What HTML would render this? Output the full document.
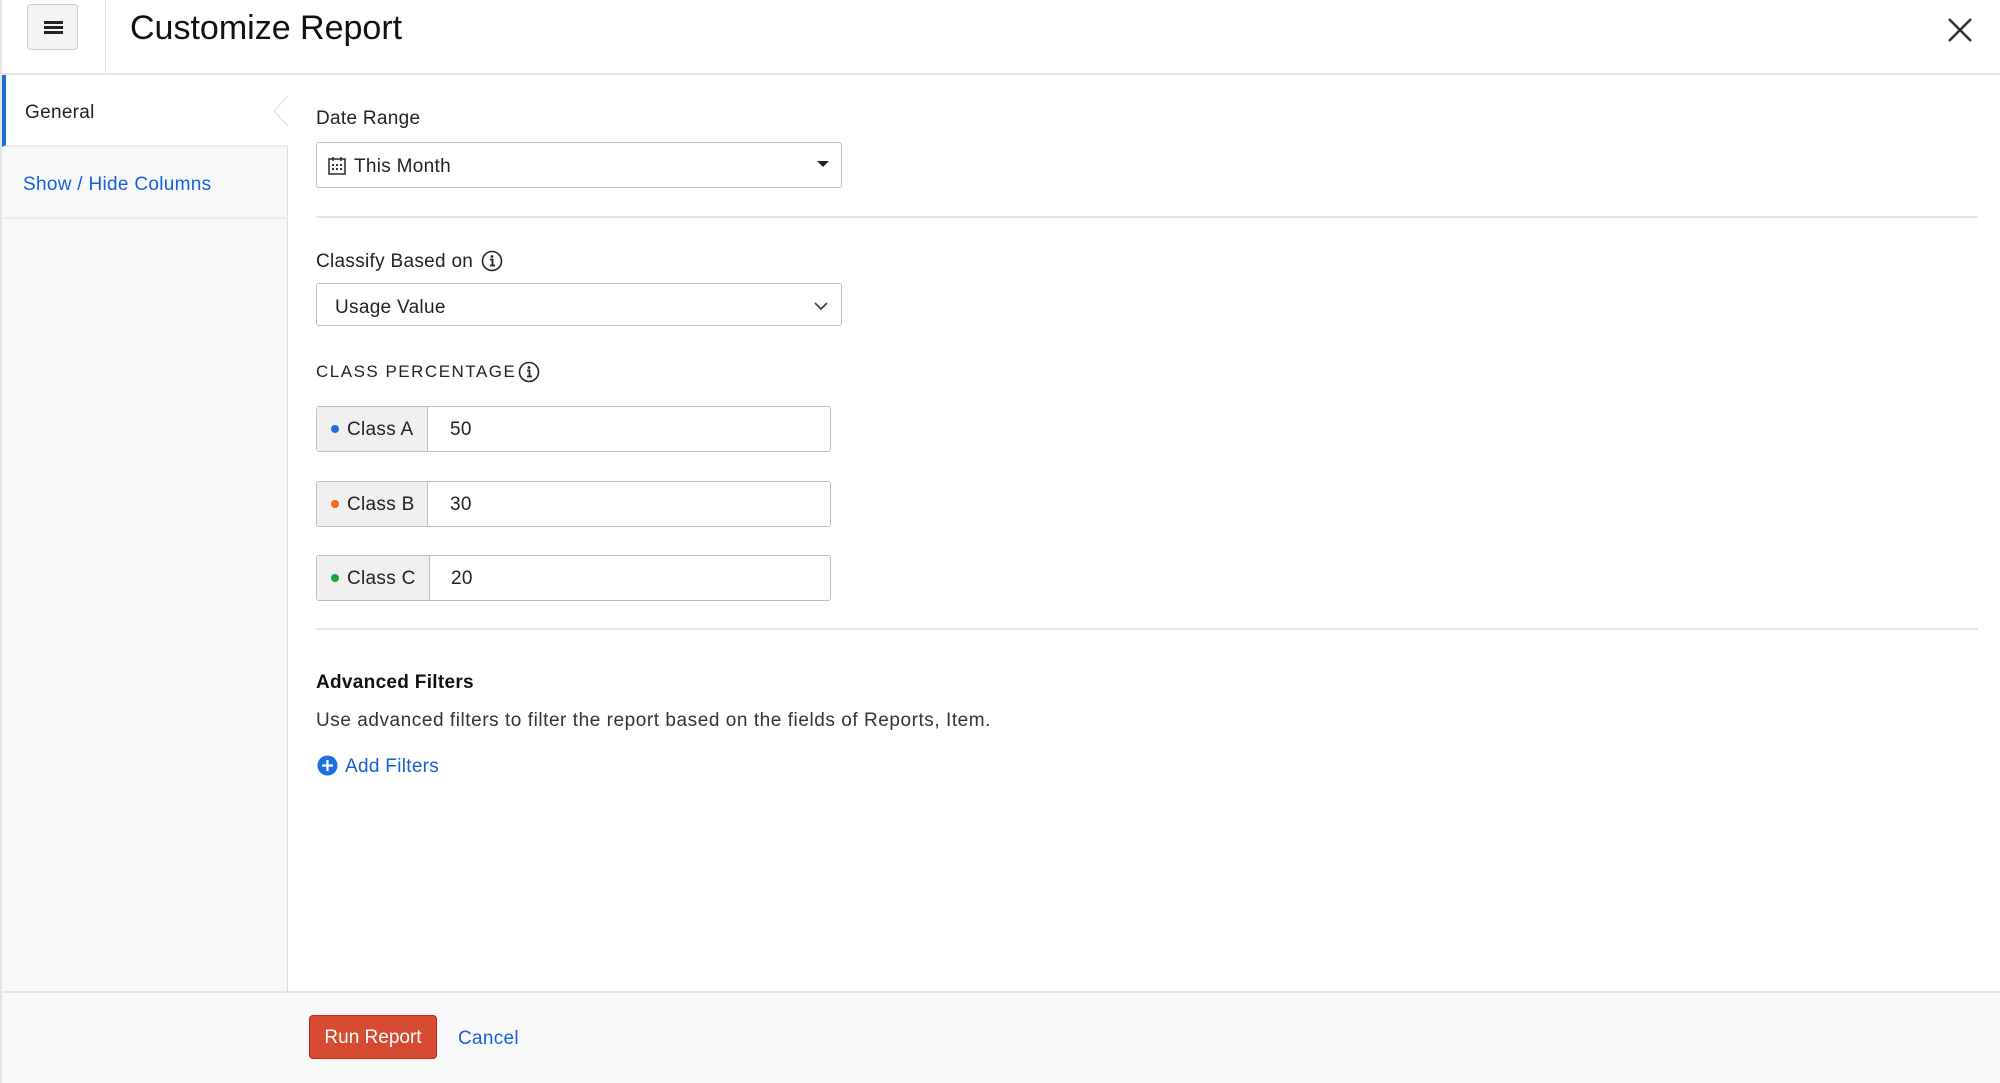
<!DOCTYPE html>
<html><head><meta charset="utf-8"><style>
*{box-sizing:border-box;margin:0;padding:0}
body{width:2000px;height:1083px;overflow:hidden;background:#fff;font-family:"Liberation Sans",Arial,sans-serif;color:#222;position:relative;letter-spacing:0.3px}
.abs{position:absolute}
.hdr{left:0;top:0;width:2000px;height:75px;border-bottom:2px solid #e4e4e4;border-left:2px solid #e4e4e4}
.ham{left:27px;top:4px;width:51px;height:46px;border:1px solid #c9ccd1;border-radius:4px;background:#f4f4f4}
.ham i{position:absolute;left:16px;width:19px;height:3px;background:#222}
.vdiv{left:105px;top:0;width:1px;height:74px;background:#e4e4e4}
.title{left:130px;top:9px;font-size:34px;color:#111;letter-spacing:0}
.side{left:0;top:75px;width:288px;height:916px;background:#f7f8fa;border-right:1px solid #dcdcdc;border-left:2px solid #e4e4e4}
.item{position:absolute;left:0;width:286px;height:72px;font-size:19px;padding-left:21px;line-height:76px;border-bottom:2px solid #ececec}
.lbl{font-size:19px;color:#222}
.box{border:1.5px solid #b9bec6;border-radius:3px;background:#fff}
.hr{left:316px;width:1662px;height:2px;background:#e4e4e4}
.cls{left:316px;width:515px;height:46px}
.cls .l{position:absolute;left:0;top:0;bottom:0;background:#efefef;border-right:1.5px solid #b9bec6;font-size:19px;line-height:46px;padding-left:30px}
.cls .l b{position:absolute;left:14px;top:18px;width:8px;height:8px;border-radius:50%}
.cls .v{position:absolute;top:0;line-height:46px;font-size:19px}
.foot{left:0;top:991px;width:2000px;height:92px;background:#f9f9f9;border-top:2px solid #e4e4e4;border-left:2px solid #e4e4e4}
</style></head><body>
<div class="abs hdr"></div>
<div class="abs ham"><i style="top:16px"></i><i style="top:21px"></i><i style="top:26px"></i></div>
<div class="abs vdiv"></div>
<div class="abs title">Customize Report</div>
<svg class="abs" style="left:1946px;top:16px" width="28" height="28" viewBox="0 0 28 28"><path d="M3 3L25 25M25 3L3 25" stroke="#333" stroke-width="2.6"/></svg>

<div class="abs side">
 <div class="item" style="top:0;background:#fff;border-left:4px solid #1c6fd1;padding-left:19px;color:#222">General</div>
 <div class="item" style="top:72px;color:#1660d6">Show / Hide Columns</div>
</div>
<svg class="abs" style="left:272px;top:95px" width="18" height="32" viewBox="0 0 18 32"><path d="M17 0L2 16L17 32Z" fill="#fff" stroke="#dcdcdc" stroke-width="1"/><rect x="16" y="0" width="3" height="32" fill="#fff"/></svg>

<div class="abs lbl" style="left:316px;top:108px">Date Range</div>
<div class="abs box" style="left:316px;top:142px;width:526px;height:46px"></div>
<svg class="abs" style="left:328px;top:156px" width="18" height="19" viewBox="0 0 18 19"><rect x="1" y="3" width="16" height="15" fill="none" stroke="#333" stroke-width="1.6"/><path d="M5 1v4M13 1v4" stroke="#333" stroke-width="1.6"/><g fill="#333"><rect x="4" y="8" width="2" height="2"/><rect x="8" y="8" width="2" height="2"/><rect x="12" y="8" width="2" height="2"/><rect x="4" y="12" width="2" height="2"/><rect x="8" y="12" width="2" height="2"/><rect x="12" y="12" width="2" height="2"/></g></svg>
<div class="abs lbl" style="left:354px;top:156px">This Month</div>
<svg class="abs" style="left:817px;top:161px" width="12" height="8"><path d="M0 0h12L6 6z" fill="#222"/></svg>

<div class="abs hr" style="top:216px"></div>

<div class="abs lbl" style="left:316px;top:251px">Classify Based on</div>
<svg class="abs" style="left:481px;top:250px" width="22" height="22" viewBox="0 0 22 22"><circle cx="11" cy="11" r="9.5" fill="none" stroke="#222" stroke-width="1.6"/><circle cx="11" cy="6.5" r="1.4" fill="#222"/><path d="M9 9.5h2.5v6M9 15.5h5" stroke="#222" stroke-width="1.8" fill="none"/></svg>
<div class="abs box" style="left:316px;top:283px;width:526px;height:43px"></div>
<div class="abs lbl" style="left:335px;top:297px">Usage Value</div>
<svg class="abs" style="left:814px;top:302px" width="14" height="9"><path d="M1 1l6 6 6-6" stroke="#444" stroke-width="1.8" fill="none"/></svg>

<div class="abs" style="left:316px;top:362px;font-size:17px;letter-spacing:1.5px;color:#222">CLASS PERCENTAGE</div>
<svg class="abs" style="left:518px;top:361px" width="22" height="22" viewBox="0 0 22 22"><circle cx="11" cy="11" r="9.5" fill="none" stroke="#222" stroke-width="1.6"/><circle cx="11" cy="6.5" r="1.4" fill="#222"/><path d="M9 9.5h2.5v6M9 15.5h5" stroke="#222" stroke-width="1.8" fill="none"/></svg>

<div class="abs cls box" style="top:406px"><div class="l" style="width:111px"><b style="background:#1c6fe0"></b>Class A</div><div class="v" style="left:133px">50</div></div>
<div class="abs cls box" style="top:481px"><div class="l" style="width:111px"><b style="background:#f06a1c"></b>Class B</div><div class="v" style="left:133px">30</div></div>
<div class="abs cls box" style="top:555px"><div class="l" style="width:113px"><b style="background:#17a33c"></b>Class C</div><div class="v" style="left:134px">20</div></div>

<div class="abs hr" style="top:628px"></div>

<div class="abs" style="left:316px;top:672px;font-size:19px;font-weight:bold;color:#111">Advanced Filters</div>
<div class="abs lbl" style="left:316px;top:710px;color:#333;letter-spacing:0.55px">Use advanced filters to filter the report based on the fields of Reports, Item.</div>
<svg class="abs" style="left:317px;top:755px" width="21" height="21" viewBox="0 0 21 21"><circle cx="10.5" cy="10.5" r="10" fill="#1c6fe0"/><path d="M10.5 5v11M5 10.5h11" stroke="#fff" stroke-width="2.2"/></svg>
<div class="abs" style="left:345px;top:756px;font-size:19px;color:#1660d6">Add Filters</div>

<div class="abs foot"></div>
<div class="abs" style="left:309px;top:1015px;width:128px;height:44px;background:#d64b32;border:1.5px solid #c0281a;border-radius:4px;color:#fff;font-size:19px;line-height:43px;text-align:center;letter-spacing:0">Run Report</div>
<div class="abs" style="left:458px;top:1028px;font-size:19px;color:#1660d6">Cancel</div>
</body></html>
